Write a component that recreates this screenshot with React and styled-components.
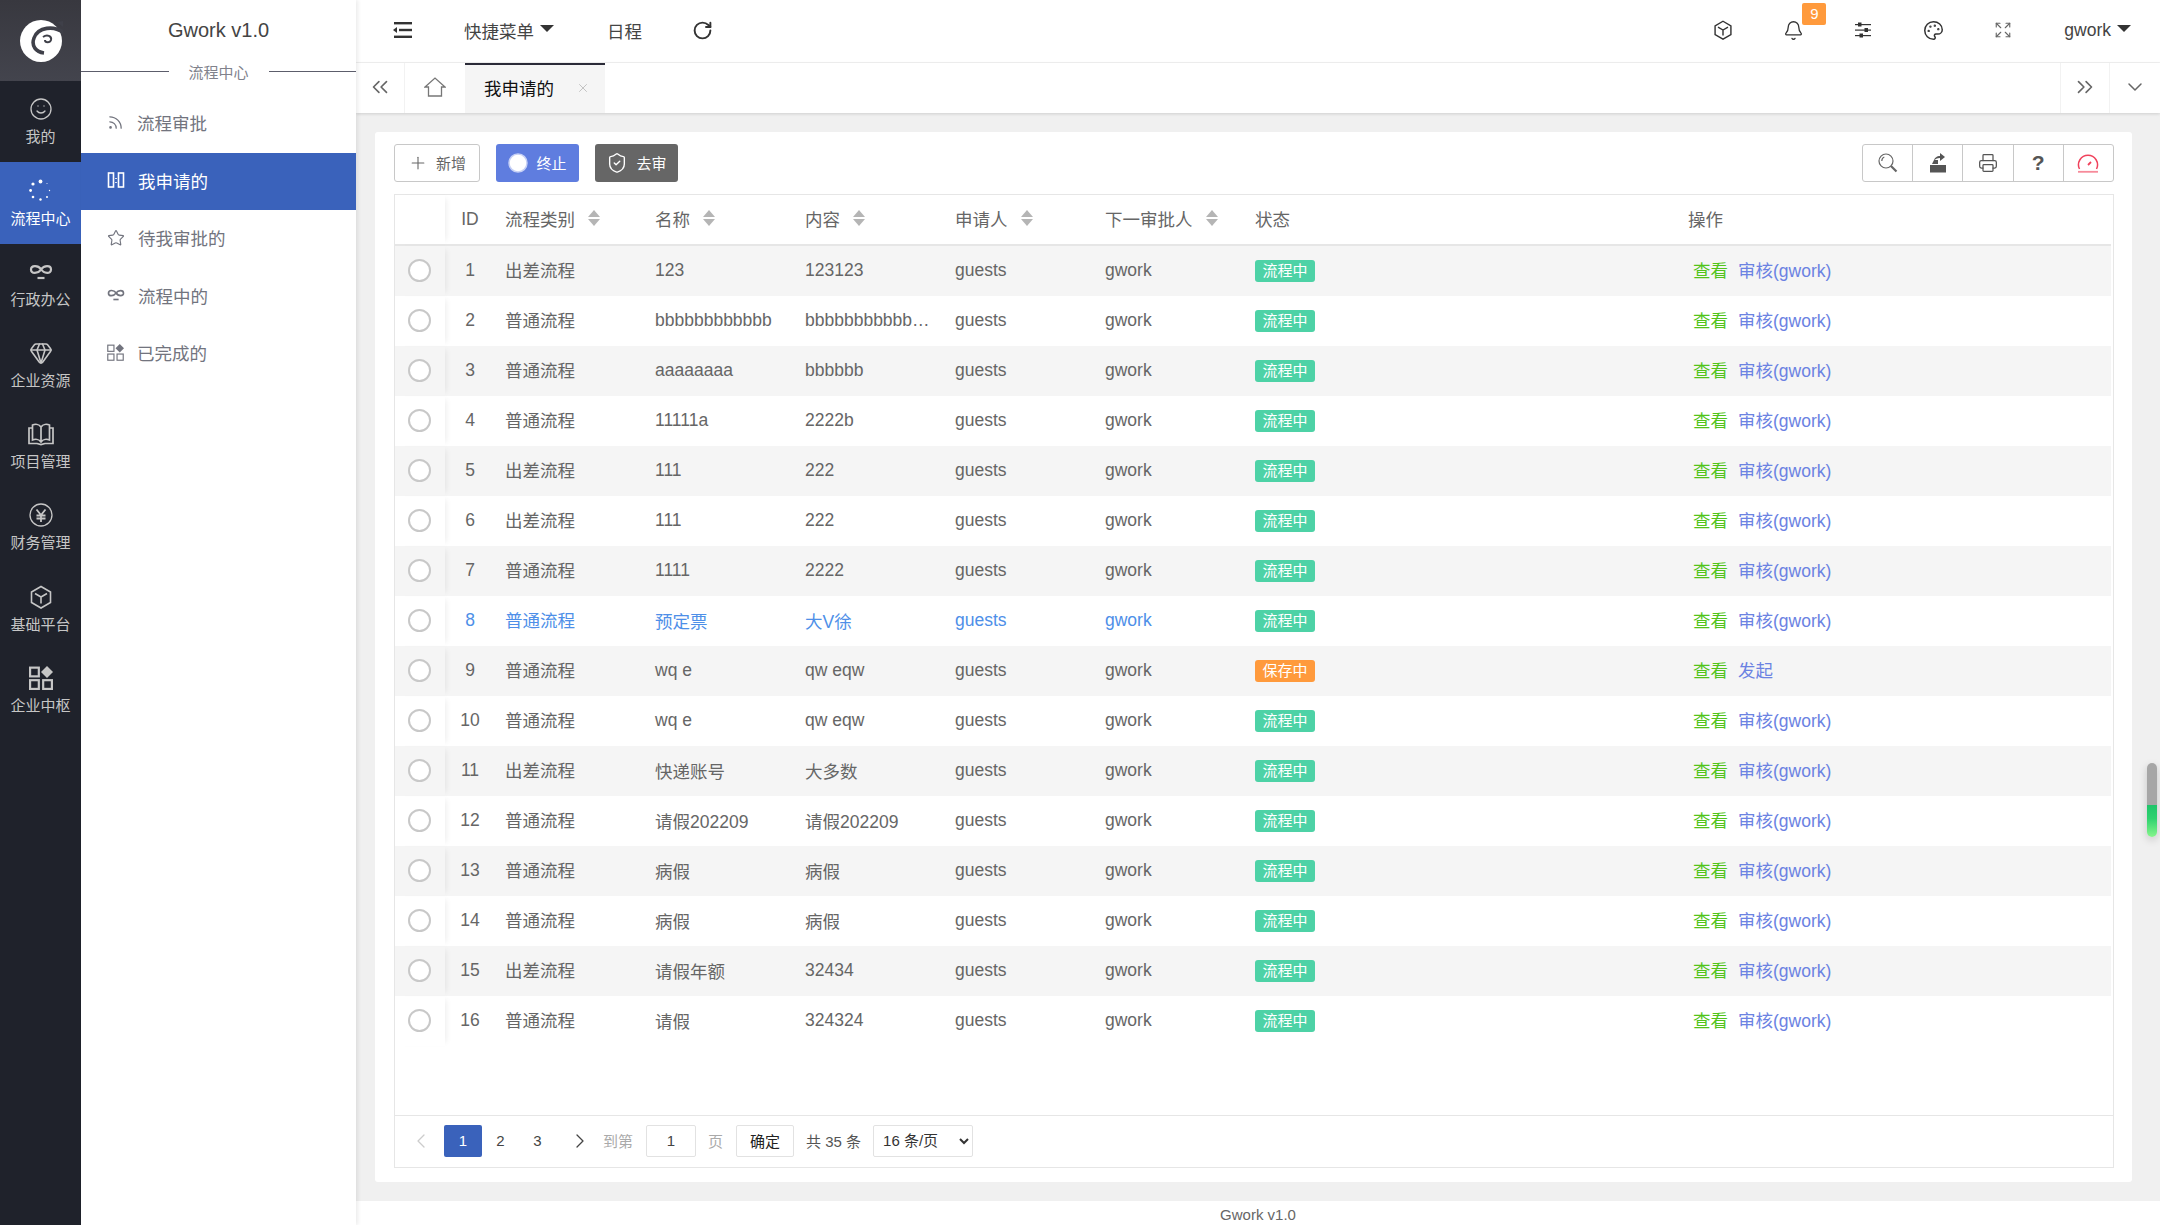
import React from 'react';
import styled, { createGlobalStyle } from 'styled-components';
import { Smile, Star, Rss, Bell, Palette, Expand, RotateCw, ShieldCheck, Gem, Printer, ChevronDown, ChevronLeft, ChevronRight, ChevronsLeft, ChevronsRight, Plus, X } from 'lucide-react';

const GlobalStyle = createGlobalStyle`
  html, body { margin: 0; padding: 0; background: #fff; }
  body { font-family: "Liberation Sans", "Noto Sans CJK SC", sans-serif; color: #666; }
  * { box-sizing: border-box; }
`;

const colors = {
  rail: '#1f222b',
  blue: '#3a62bb',
  line: '#e6e6e6',
  stripe: '#f5f5f5',
  link: '#6b82e2',
  green: '#52c41a',
  rowBlue: '#4e8fe8',
};

const Page = styled.div`
  display: flex;
  width: 2160px;
  height: 1225px;
  overflow: hidden;
  position: relative;
`;

const Rail = styled.nav`
  width: 81px;
  flex: none;
  background: ${colors.rail};
  display: flex;
  flex-direction: column;
`;

const LogoBox = styled.div`
  height: 81px;
  background: linear-gradient(180deg, #38383f, #43444d);
  display: flex;
  align-items: center;
  justify-content: center;
`;

const RailItem = styled.a`
  height: 81.3px;
  display: flex;
  flex-direction: column;
  align-items: center;
  padding-top: ${(p) => (p.$active ? '17px' : '16px')};
  gap: 6px;
  font-size: 15px;
  line-height: 20px;
  color: ${(p) => (p.$active ? '#fff' : '#c6c6c6')};
  background: ${(p) => (p.$active ? colors.blue : 'transparent')};
  svg { display: block; }
`;

const SubPanel = styled.aside`
  width: 275px;
  flex: none;
  background: #fff;
  box-shadow: 2px 0 4px rgba(0, 0, 0, 0.08);
  position: relative;
  z-index: 2;
`;

const SubTitle = styled.div`
  height: 61px;
  display: flex;
  align-items: center;
  justify-content: center;
  font-size: 20px;
  color: #444;
`;

const Divider = styled.div`
  display: flex;
  align-items: center;
  height: 20px;
  font-size: 15px;
  color: #80828c;
  gap: 20px;
  &::before, &::after {
    content: '';
    flex: 1;
    height: 1px;
    background: #5c5d6b;
  }
`;

const Menu = styled.div`
  margin-top: 14px;
`;

const MenuItem = styled.a`
  height: 57.5px;
  display: flex;
  align-items: center;
  padding: 0 0 2px 26px;
  gap: 13px;
  font-size: 17.5px;
  color: ${(p) => (p.$active ? '#fff' : '#72747e')};
  background: ${(p) => (p.$active ? colors.blue : 'transparent')};
  svg { flex: none; }
`;

const Main = styled.div`
  flex: 1;
  min-width: 0;
  display: flex;
  flex-direction: column;
  background: #f0f0f0;
`;

const TopBar = styled.header`
  height: 63px;
  flex: none;
  background: #fff;
  border-bottom: 1px solid #f2f2f2;
  display: flex;
  align-items: center;
  padding: 0 0 2px 35px;
  font-size: 17.5px;
  color: #444;
`;

const TopIcon = styled.span`
  display: flex;
  align-items: center;
  justify-content: center;
  width: 24px;
  margin-right: ${(p) => p.$mr || 46}px;
  position: relative;
  color: ${(p) => p.$fg || '#333'};
`;

const TopText = styled.span`
  display: flex;
  align-items: center;
  margin-right: ${(p) => p.$mr || 0}px;
`;

const Caret = styled.i`
  display: inline-block;
  margin-left: 6px;
  margin-top: -3px;
  border-left: 7px solid transparent;
  border-right: 7px solid transparent;
  border-top: 7px solid #333;
`;

const Spacer = styled.div`
  flex: 1;
`;

const Badge = styled.span`
  position: absolute;
  left: 21px;
  top: -17px;
  width: 24px;
  height: 22px;
  background: #ff9a3c;
  color: #fff;
  border-radius: 2px;
  font-size: 15px;
  line-height: 22px;
  text-align: center;
`;

const TabBar = styled.div`
  height: 50px;
  flex: none;
  background: #fff;
  display: flex;
  box-shadow: 0 1px 3px rgba(0, 0, 0, 0.14);
  position: relative;
`;

const TabTool = styled.span`
  width: ${(p) => p.$w}px;
  padding-bottom: 2px;
  display: flex;
  align-items: center;
  justify-content: center;
  color: #666;
  border-right: ${(p) => (p.$noLine ? 'none' : '1px solid #f2f2f2')};
  border-left: ${(p) => (p.$leftLine ? '1px solid #f2f2f2' : 'none')};
`;

const ActiveTab = styled.div`
  width: 140px;
  background: #f5f5f5;
  border-top: 2px solid #2b2b38;
  display: flex;
  align-items: center;
  padding: 0 15px 3px 19px;
  font-size: 17.5px;
  color: #111;
  justify-content: space-between;
  svg { color: #bbb; }
`;

const Content = styled.main`
  flex: 1;
  min-height: 0;
  padding: 19px 28px 19px 19px;
  display: flex;
`;

const Card = styled.section`
  flex: 1;
  background: #fff;
  border-radius: 3px;
  padding: 12px 18px 14px 19px;
  display: flex;
  flex-direction: column;
`;

const Toolbar = styled.div`
  height: 38px;
  display: flex;
  gap: 16px;
  margin-bottom: 12px;
`;

const Btn = styled.button`
  width: ${(p) => p.$w || 83}px;
  height: 38px;
  padding: 0 0 1px;
  display: flex;
  align-items: center;
  justify-content: center;
  gap: 8px;
  font: 15px "Liberation Sans", "Noto Sans CJK SC", sans-serif;
  border-radius: 3px;
  color: ${(p) => p.$fg || '#fff'};
  background: ${(p) => p.$bg || '#fff'};
  border: ${(p) => (p.$outline ? '1px solid #c8c8c8' : 'none')};
`;

const ToolGroup = styled.div`
  margin-left: auto;
  width: 252px;
  display: flex;
  border: 1px solid #c8c8c8;
  border-radius: 3px;
`;

const ToolCell = styled.span`
  flex: 1;
  display: flex;
  align-items: center;
  justify-content: center;
  font-size: 21px;
  font-weight: 700;
  color: #555;
  & + & { border-left: 1px solid #c8c8c8; }
`;

const TableBox = styled.div`
  flex: 1;
  border: 1px solid ${colors.line};
  display: flex;
  flex-direction: column;
`;

const Row = styled.div`
  display: grid;
  grid-template-columns: 50px 48px 150px 150px 150px 150px 150px 433px 1fr;
  height: ${(p) => (p.$head ? 51 : 50)}px;
  margin-right: 2px;
  align-items: stretch;
  font-size: 17.5px;
  color: ${(p) => (p.$blue ? colors.rowBlue : '#666')};
  background: ${(p) => (p.$striped ? colors.stripe : '#fff')};
  border-bottom: ${(p) => (p.$head ? `2px solid ${colors.line}` : 'none')};
`;

const RadioCell = styled.div`
  display: flex;
  align-items: center;
  justify-content: center;
  padding-bottom: 1px;
  position: relative;
  box-shadow: 5px 0 6px -4px rgba(0, 0, 0, 0.08);
`;

const Radio = styled.span`
  width: 23px;
  height: 23px;
  border-radius: 50%;
  border: 2px solid #c8c8c8;
  background: #fff;
  margin-right: 2px;
`;

const IdCell = styled.div`
  display: flex;
  align-items: center;
  justify-content: center;
  padding: 0 0 1px 2px;
`;

// the CJK fallback sits lower than latin text, $cjk lifts those cells a bit
const Cell = styled.div`
  display: flex;
  align-items: center;
  padding: 0 12px ${(p) => (p.$cjk ? 3 : 1)}px;
  min-width: 0;
  white-space: nowrap;
`;

const SortIcon = styled.span`
  display: inline-flex;
  flex-direction: column;
  gap: 2px;
  margin-left: 13px;
  &::before, &::after {
    content: '';
    width: 0;
    height: 0;
    border-left: 6.5px solid transparent;
    border-right: 6.5px solid transparent;
  }
  &::before { border-bottom: 7px solid #b5b5b5; }
  &::after { border-top: 7px solid #b5b5b5; }
`;

const Tag = styled.span`
  width: 60px;
  height: 22px;
  background: ${(p) => (p.$orange ? '#ff9a3c' : '#4dd2a6')};
  color: #fff;
  border-radius: 3px;
  font-size: 15px;
  line-height: 22px;
  text-align: center;
`;

const Link = styled.a`
  color: ${(p) => (p.$green ? colors.green : colors.link)};
  margin-left: ${(p) => (p.$green ? 5 : 10)}px;
`;

const Rows = styled.div`
  flex: 1;
`;

const Pager = styled.div`
  height: 52px;
  flex: none;
  border-top: 1px solid ${colors.line};
  display: flex;
  align-items: center;
  padding: 0 0 2px 7px;
  font-size: 15px;
  color: #555;
`;

const PageBtn = styled.span`
  width: ${(p) => p.$w || 37}px;
  height: 32px;
  margin-left: ${(p) => p.$ml || 0}px;
  display: flex;
  align-items: center;
  justify-content: center;
  border-radius: 2px;
  color: ${(p) => (p.$active ? '#fff' : p.$muted ? '#ccc' : '#444')};
  background: ${(p) => (p.$active ? colors.blue : 'transparent')};
`;

const PagerText = styled.span`
  margin-left: ${(p) => p.$ml}px;
  color: ${(p) => (p.$muted ? '#aaa' : '#555')};
`;

const PageInput = styled.input`
  width: 50px;
  height: 32px;
  margin-left: 13px;
  border: 1px solid #e2e2e2;
  border-radius: 2px;
  text-align: center;
  font: 15px "Liberation Sans", sans-serif;
  color: #444;
  outline: none;
`;

const ConfirmBtn = styled.button`
  width: 58px;
  height: 32px;
  margin-left: 13px;
  padding: 0;
  border: 1px solid #e2e2e2;
  border-radius: 2px;
  background: #fff;
  font: 15px "Liberation Sans", "Noto Sans CJK SC", sans-serif;
  color: #222;
`;

const SizeSelect = styled.select`
  width: 100px;
  height: 32px;
  margin-left: 12px;
  border: 1px solid #e2e2e2;
  border-radius: 2px;
  background: #fff;
  font: 15px "Liberation Sans", "Noto Sans CJK SC", sans-serif;
  color: #333;
  padding-left: 5px;
`;

const Foot = styled.footer`
  height: 24px;
  flex: none;
  background: #fff;
  text-align: center;
  font-size: 15px;
  line-height: 28px;
  color: #666;
`;

const Scroller = styled.div`
  position: absolute;
  left: 2147px;
  top: 763px;
  width: 10px;
  height: 74px;
  border-radius: 5px;
  overflow: hidden;
  background: linear-gradient(180deg, #a6a6a6 0, #a6a6a6 57%, #1fc56a 57%, #2fd26f 75%, #86f58c 100%);
  box-shadow: 0 3px 8px rgba(0, 0, 0, 0.18);
`;

// hand drawn icons, the ones lucide has no close match for
const Logo = () => (
  <svg width="44" height="44" viewBox="0 0 44 44">
    <circle cx="22" cy="22" r="21" fill="#fff" />
    <path d="M45 14C35 6 19 8 15 19c-3 8 2 14 10 15" fill="none" stroke="#3f4049" strokeWidth="3.600" />
    <path d="M45 14 44 8 38 3 44 2Z" fill="#3f4049" />
    <path d="M24 18c4-3 9-1 8 3-1 3-6 3-6 0" fill="none" stroke="#3f4049" strokeWidth="2" />
  </svg>
);

const Spinner = () => (
  <svg width="24" height="24" viewBox="0 0 24 24" fill="#fff">
    <circle cx="11.5" cy="2.5" r="1.9" />
    <circle cx="4" cy="5" r="1.6" />
    <circle cx="1.6" cy="11.5" r="1.4" />
    <circle cx="4" cy="18" r="1.3" />
    <circle cx="11.5" cy="20.5" r="1.2" />
    <circle cx="18" cy="18" r="1" />
    <circle cx="20.5" cy="11.5" r=".7" />
    <circle cx="18" cy="4.6" r=".5" />
  </svg>
);

const Loop = ({ size = 24 }) => (
  <svg width={size} height={size} viewBox="0 0 24 24" fill="none" stroke="currentColor" strokeWidth="2.2">
    <path d="M12 9C9 5 2 5 2 9.5S9 14 12 9.5 22 5 22 9.5 15 14 12 9Z" />
    <path d="M8.5 18h7" />
  </svg>
);

const Book = () => (
  <svg width="26" height="24" viewBox="0 0 26 24" fill="none" stroke="currentColor" strokeWidth="1.7">
    <path d="M13 5C11 2 7 2 4.500 3v15C7 17 11 17 13 20c2-3 6-3 8.500-2V3C19 2 15 2 13 5Zm0 0v15" />
    <path d="M4.500 6H1v15.500h8l4 1 4-1h8V6h-3.500" />
  </svg>
);

const YenCircle = () => (
  <svg width="24" height="24" viewBox="0 0 24 24" fill="none" stroke="currentColor" strokeWidth="1.3">
    <circle cx="12" cy="12" r="11" />
    <path d="M7.500 6.500 12 12l4.500-5.500M7.500 12.500h9M7.500 15.500h9M12 12v7" strokeWidth="1.8" />
  </svg>
);

const Cube = ({ size = 24, w = 1.6 }) => (
  <svg width={size} height={size} viewBox="0 0 24 24" fill="none" stroke="currentColor" strokeWidth={w}>
    <path d="M12 1.500 21.500 7v10.500L12 23l-9.500-5.500V7Z" />
    <path d="M6 8.500 12 12l6-3.500M12 12v6.500" />
  </svg>
);

const Apps = ({ size = 22, w = 2 }) => (
  <svg width={size} height={size} viewBox="0 0 22 22" fill="none" stroke="currentColor" strokeWidth={w}>
    <rect x="1" y="1.500" width="8" height="8" />
    <rect x="1" y="13" width="8" height="8" />
    <rect x="13" y="13" width="8" height="8" />
    <path d="M16.500 0 22 5.500l-5.500 5.500L11 5.500Z" fill="currentColor" stroke="none" />
  </svg>
);

const Columns = () => (
  <svg width="18" height="18" viewBox="0 0 18 18" fill="none" stroke="currentColor" strokeWidth="1.6">
    <rect x="1.500" y="2" width="5" height="14" />
    <rect x="11.500" y="2" width="5" height="14" />
    <path d="M9 7v1M9 11v1" />
  </svg>
);

const Home = () => (
  <svg width="22" height="20" viewBox="0 0 22 20" fill="none" stroke="#777" strokeWidth="1.3">
    <path d="M1 10 11 1l10 9h-3.500v9h-13v-9Z" />
  </svg>
);

const Hamburger = () => (
  <svg width="20" height="18" viewBox="0 0 20 18" fill="#333">
    <rect x="1" y="1" width="18" height="2.400" />
    <rect x="6" y="7.800" width="13" height="2.400" />
    <rect x="1" y="14.600" width="18" height="2.400" />
    <path d="M0 9 4 6v6Z" />
  </svg>
);

const Sliders = () => (
  <svg width="18" height="18" viewBox="0 0 18 18" fill="#333">
    <rect x="1" y="3" width="16" height="1.200" />
    <rect x="1" y="8.500" width="16" height="1.200" />
    <rect x="1" y="14" width="16" height="1.200" />
    <rect x="4" y="1.500" width="3.500" height="4" />
    <rect x="10.500" y="7" width="3.500" height="4" />
    <rect x="5.500" y="12.500" width="3.500" height="4" />
  </svg>
);

const Lens = () => (
  <svg width="20" height="20" viewBox="0 0 20 20" fill="none" stroke="#666" strokeWidth="1.200">
    <circle cx="8" cy="8" r="7" />
    <path d="M3.800 8c0-2 1-3.500 2.500-4" />
    <path d="m13 13 5.500 5.500" strokeWidth="2.200" />
  </svg>
);

const FolderOut = () => (
  <svg width="18" height="20" viewBox="0 0 18 20" fill="#555">
    <path d="M1 12h16v7.500H1Z" />
    <path d="M3 11 5 7h4v4Z M11 3V0l5 4-5 4V5C8 5 6 6 5 8 5 5 8 3 11 3Z" />
  </svg>
);

const Gauge = () => (
  <svg width="22" height="20" viewBox="0 0 22 20" fill="none" strokeWidth="1.500" stroke="#f0425c">
    <path d="M2.500 16a9.500 9.500 0 1 1 17 0" />
    <path d="M11 12l3-3" strokeWidth="1.800" />
    <path d="M1 18.800h20" stroke="#f78a9a" strokeWidth="1.800" />
  </svg>
);

const railItems = [
  { label: '我的', icon: <Smile size={24} strokeWidth={1.3} /> },
  { label: '流程中心', icon: <Spinner />, active: true },
  { label: '行政办公', icon: <Loop /> },
  { label: '企业资源', icon: <Gem size={24} strokeWidth={1.6} /> },
  { label: '项目管理', icon: <Book /> },
  { label: '财务管理', icon: <YenCircle /> },
  { label: '基础平台', icon: <Cube /> },
  { label: '企业中枢', icon: <Apps size={24} /> },
];

const menuItems = [
  { label: '流程审批', icon: <Rss size={17} strokeWidth={1.8} /> },
  { label: '我申请的', icon: <Columns />, active: true },
  { label: '待我审批的', icon: <Star size={18} strokeWidth={1.5} /> },
  { label: '流程中的', icon: <Loop size={18} /> },
  { label: '已完成的', icon: <Apps size={17} w={1.500} /> },
];

const normal = (id, type, name, content) => ({ id, type, name, content });

const rows = [
  normal(1, '出差流程', '123', '123123'),
  normal(2, '普通流程', 'bbbbbbbbbbbb', 'bbbbbbbbbbb…'),
  normal(3, '普通流程', 'aaaaaaaa', 'bbbbbb'),
  normal(4, '普通流程', '11111a', '2222b'),
  normal(5, '出差流程', '111', '222'),
  normal(6, '出差流程', '111', '222'),
  normal(7, '普通流程', '1111', '2222'),
  { ...normal(8, '普通流程', '预定票', '大V徐'), blue: true },
  { ...normal(9, '普通流程', 'wq e', 'qw eqw'), saved: true },
  normal(10, '普通流程', 'wq e', 'qw eqw'),
  normal(11, '出差流程', '快递账号', '大多数'),
  normal(12, '普通流程', '请假202209', '请假202209'),
  normal(13, '普通流程', '病假', '病假'),
  normal(14, '普通流程', '病假', '病假'),
  normal(15, '出差流程', '请假年额', '32434'),
  normal(16, '普通流程', '请假', '324324'),
];

const heads = [
  ['流程类别', true],
  ['名称', true],
  ['内容', true],
  ['申请人', true],
  ['下一审批人', true],
  ['状态', false],
  ['操作', false],
];

export default function App() {
  return (
    <Page>
      <GlobalStyle />
      <Rail>
        <LogoBox>
          <Logo />
        </LogoBox>
        {railItems.map((item) => (
          <RailItem key={item.label} $active={item.active}>
            {item.icon}
            <span>{item.label}</span>
          </RailItem>
        ))}
      </Rail>

      <SubPanel>
        <SubTitle>Gwork v1.0</SubTitle>
        <Divider>流程中心</Divider>
        <Menu>
          {menuItems.map((item) => (
            <MenuItem key={item.label} $active={item.active}>
              {item.icon}
              <span>{item.label}</span>
            </MenuItem>
          ))}
        </Menu>
      </SubPanel>

      <Main>
        <TopBar>
          <TopIcon $mr={49}>
            <Hamburger />
          </TopIcon>
          <TopText $mr={53}>
            快捷菜单
            <Caret />
          </TopText>
          <TopText $mr={48}>日程</TopText>
          <TopIcon>
            <RotateCw size={21} strokeWidth={2.2} />
          </TopIcon>
          <Spacer />
          <TopIcon>
            <Cube size={20} w={1.700} />
          </TopIcon>
          <TopIcon>
            <Bell size={21} strokeWidth={1.500} />
            <Badge>9</Badge>
          </TopIcon>
          <TopIcon>
            <Sliders />
          </TopIcon>
          <TopIcon>
            <Palette size={21} strokeWidth={1.700} />
          </TopIcon>
          <TopIcon $mr={49} $fg="#666">
            <Expand size={18} strokeWidth={1.500} />
          </TopIcon>
          <TopText $mr={29}>
            gwork
            <Caret />
          </TopText>
        </TopBar>

        <TabBar>
          <TabTool $w={49}>
            <ChevronsLeft size={26} strokeWidth={1.500} />
          </TabTool>
          <TabTool $w={60} $noLine>
            <Home />
          </TabTool>
          <ActiveTab>
            <span>我申请的</span>
            <X size={14} strokeWidth={1.500} />
          </ActiveTab>
          <Spacer />
          <TabTool $w={50} $leftLine>
            <ChevronsRight size={26} strokeWidth={1.500} />
          </TabTool>
          <TabTool $w={50} $noLine>
            <ChevronDown size={24} strokeWidth={1.500} />
          </TabTool>
        </TabBar>

        <Content>
          <Card>
            <Toolbar>
              <Btn $w={86} $outline $bg="#fff" $fg="#666">
                <Plus size={20} strokeWidth={1.300} />
                新增
              </Btn>
              <Btn $bg="#5f7ddf">
                <svg width="20" height="20" viewBox="0 0 20 20">
                  <circle cx="10" cy="10" r="9" fill="#fff" stroke="#c6d0f5" strokeWidth="1.500" />
                </svg>
                终止
              </Btn>
              <Btn $bg="#666">
                <ShieldCheck size={22} strokeWidth={1.500} />
                去审
              </Btn>
              <ToolGroup>
                <ToolCell>
                  <Lens />
                </ToolCell>
                <ToolCell>
                  <FolderOut />
                </ToolCell>
                <ToolCell>
                  <Printer size={20} strokeWidth={1.500} />
                </ToolCell>
                <ToolCell>?</ToolCell>
                <ToolCell>
                  <Gauge />
                </ToolCell>
              </ToolGroup>
            </Toolbar>

            <TableBox>
              <Row $head>
                <RadioCell />
                <IdCell>ID</IdCell>
                {heads.map(([label, sortable]) => (
                  <Cell key={label} $cjk>
                    {label}
                    {sortable && <SortIcon />}
                  </Cell>
                ))}
              </Row>
              <Rows>
                {rows.map((row) => (
                  <Row key={row.id} $striped={row.id % 2 === 1} $blue={row.blue}>
                    <RadioCell>
                      <Radio />
                    </RadioCell>
                    <IdCell>{row.id}</IdCell>
                    <Cell $cjk>{row.type}</Cell>
                    <Cell>{row.name}</Cell>
                    <Cell>{row.content}</Cell>
                    <Cell>guests</Cell>
                    <Cell>gwork</Cell>
                    <Cell>
                      <Tag $orange={row.saved}>{row.saved ? '保存中' : '流程中'}</Tag>
                    </Cell>
                    <Cell $cjk>
                      <Link $green>查看</Link>
                      <Link>{row.saved ? '发起' : '审核(gwork)'}</Link>
                    </Cell>
                  </Row>
                ))}
              </Rows>
              <Pager>
                <PageBtn $muted>
                  <ChevronLeft size={24} strokeWidth={1.300} />
                </PageBtn>
                <PageBtn $active $w={38} $ml={5}>
                  1
                </PageBtn>
                <PageBtn>2</PageBtn>
                <PageBtn>3</PageBtn>
                <PageBtn $w={38} $ml={5}>
                  <ChevronRight size={24} strokeWidth={1.300} />
                </PageBtn>
                <PagerText $ml={4} $muted>
                  到第
                </PagerText>
                <PageInput value="1" readOnly />
                <PagerText $ml={12} $muted>
                  页
                </PagerText>
                <ConfirmBtn>确定</ConfirmBtn>
                <PagerText $ml={12}>共 35 条</PagerText>
                <SizeSelect defaultValue="16">
                  <option value="16">16 条/页</option>
                </SizeSelect>
              </Pager>
            </TableBox>
          </Card>
        </Content>

        <Foot>Gwork v1.0</Foot>
      </Main>

      <Scroller />
    </Page>
  );
}
